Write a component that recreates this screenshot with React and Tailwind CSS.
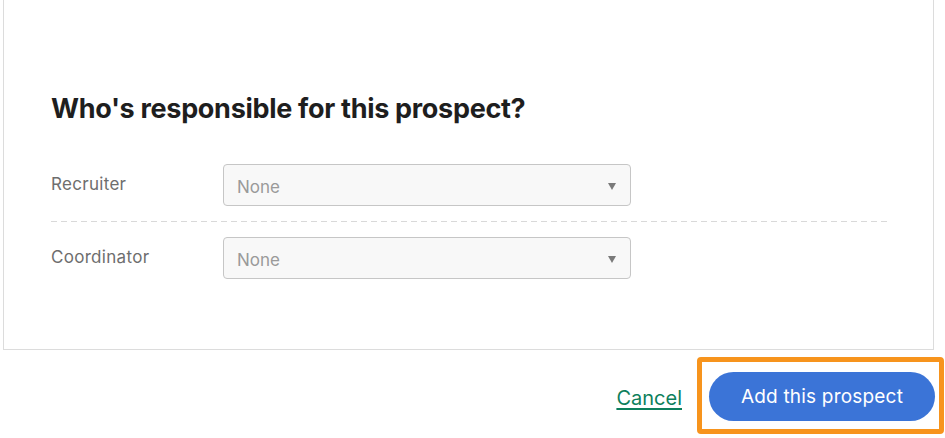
const font = { fontFamily: 'Inter, "Liberation Sans", sans-serif' };

const Seletor = ({ valor = 'None' }) => (
  <div className="relative w-[408px] h-[42px] rounded-[4px] border border-[#c6c6c6] bg-[#f8f8f8] flex items-center pl-[13px] pt-[5px]">
    <span className="text-[17px] text-[#9a9a9a]">{valor}</span>
    <span className="absolute right-[14px] top-[18px] w-0 h-0 border-l-[4px] border-r-[4px] border-t-[7px] border-l-transparent border-r-transparent border-t-[#7a7a7a]" />
  </div>
);

const Linha = ({ rotulo }) => (
  <div className="flex items-center">
    <div className="w-[172px] text-[17px] tracking-[0.3px] text-[#6e6e6e] -mt-[1px]">{rotulo}</div>
    <Seletor />
  </div>
);

export default function App() {
  return (
    <div className="w-[945px] h-[438px] bg-white overflow-hidden" style={font}>
      {/* Painel */}
      <div className="ml-[3px] w-[931px] h-[350px] border-l border-r border-b border-[#dcdcdc] pl-[47px] pt-[92px]">
        <h2 className="text-[27px] leading-[34px] font-bold text-[#1e1e1e] tracking-[-0.3px]">
          Who's responsible for this prospect?
        </h2>

        <div className="mt-[38px]">
          <Linha rotulo="Recruiter" />
          <div className="w-[837px] my-[15px] h-px bg-[repeating-linear-gradient(to_right,#d9d9d9_0_6px,transparent_6px_10px)]" />
          <Linha rotulo="Coordinator" />
        </div>
      </div>

      {/* Rodapé */}
      <div className="flex items-center justify-end pr-[1px] mt-[7px]">
        <a href="#" className="text-[20px] text-[#0d7f5c] underline underline-offset-[3px] mr-[15px] mt-[4px]">
          Cancel
        </a>
        <div className="w-[247px] h-[77px] rounded-[4px] border-[5px] border-[#f7941d] pl-[7px] pr-[4px] pt-[10px]">
          <button className="w-full h-[49px] rounded-full bg-[#3b74d7] text-white text-[19px] tracking-[0.2px] pt-[2px]">
            Add this prospect
          </button>
        </div>
      </div>
    </div>
  );
}
